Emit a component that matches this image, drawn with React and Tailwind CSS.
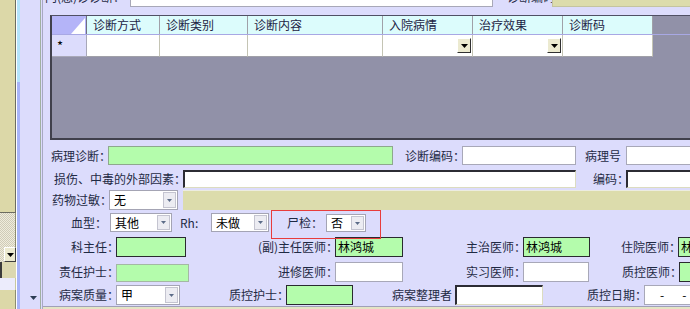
import React from 'react'

// small building blocks for the old-style form
function Lbl({ className = '', children }) {
  return (
    <div className={`shrink-0 flex items-center justify-end whitespace-nowrap text-[#1f2a44] ${className}`}>
      <span className="-mr-[3px]">{children}</span>
    </div>
  )
}

function Combo({ className = '', value }) {
  return (
    <div className={`shrink-0 flex items-stretch bg-white border border-[#a4a4b4] ${className}`}>
      <span className="flex-1 pl-[4px] flex items-center text-black">{value}</span>
      <span className="w-[13px] my-[1px] mr-[1px] bg-[#ececf2] border border-[#c4c4d0] flex items-center justify-center">
        <svg width="5" height="3" viewBox="0 0 5 3">
          <path d="M0 0h5L2.5 3z" fill="#5c6c88" />
        </svg>
      </span>
    </div>
  )
}

function GridBtn() {
  return (
    <span className="w-[14px] h-[15px] bg-[#ecead0] border border-t-white border-l-white border-r-[#303030] border-b-[#303030] flex items-center justify-center">
      <svg width="7" height="4" viewBox="0 0 7 4">
        <path d="M0 0h7L3.5 4z" fill="#000" />
      </svg>
    </span>
  )
}

const green = 'shrink-0 bg-[#b4fcac] border border-[#2a2a30] flex items-center pl-[2px] text-black whitespace-nowrap overflow-hidden'
const greenLight = 'shrink-0 bg-[#b4fcac] border border-[#a4b8a4]'
const white = 'shrink-0 bg-white border border-[#a8a8b8]'
const sunken = 'shrink-0 bg-white border-t-2 border-l-2 border-t-[#2c2c34] border-l-[#2c2c34] border-b border-r border-b-[#dcdcc0] border-r-[#dcdcc0]'

export default function App() {
  return (
    <div className="w-[690px] h-[309px] overflow-hidden flex bg-[#dcdcfc] font-['Noto_Sans_CJK_SC',sans-serif] text-[12px] leading-none">
      {/* left neighbour window strip */}
      <div className="w-[40px] shrink-0 flex">
        <div className="w-[16px] flex flex-col">
          <div className="h-[213px] bg-[#dcd8a8] border-r border-b border-[#6c6c60]" />
          <div className="h-[34px] border-r border-[#8c8c70] bg-[image:repeating-conic-gradient(#cfcbb8_0_25%,#efecdc_0_50%)] bg-[length:2px_2px]" />
          <div className="h-[15px] flex">
            <div className="w-[4px] bg-[image:repeating-conic-gradient(#cfcbb8_0_25%,#efecdc_0_50%)] bg-[length:2px_2px]" />
            <div className="flex-1 bg-[#ecead0] border border-t-white border-l-white border-r-[#404040] border-b-[#404040] flex items-center justify-center">
              <svg width="7" height="4" viewBox="0 0 7 4">
                <path d="M0 0h7L3.5 4z" fill="#000" />
              </svg>
            </div>
          </div>
          <div className="h-[16px] bg-[#dcd8b0] border-l-2 border-[#3c3c3c]" />
          <div className="h-[12px] bg-[#ececfc] border-r border-[#c8c8a0]" />
          <div className="flex-1 bg-[#dcd8a8] border-r border-[#8c8c70]" />
        </div>
        <div className="w-[1px] bg-white" />
        <div className="w-[3px] flex flex-col">
          <div className="h-[82px] bg-[#b4e4fc]" />
          <div className="flex-1 bg-[#a8b4f8]" />
        </div>
        <div className="flex-1 flex flex-col justify-end pb-[9px] pl-[10px]">
          <svg width="7" height="4" viewBox="0 0 7 4">
            <path d="M0 0h7L3.5 4z" fill="#2c3c54" />
          </svg>
        </div>
      </div>

      {/* main form panel */}
      <div className="flex-1 min-w-0 border-l border-[#a0b0a0] pl-[1px]">
        <div className="h-full flex flex-col border-l border-[#a8a8c4] overflow-hidden">
          {/* top row, mostly scrolled out */}
          <div className="h-[15px] shrink-0">
            <div className="-mt-[14px] h-[21px] flex">
              <Lbl className="w-[87px] pr-[8px]">门(急)诊诊断：</Lbl>
              <div className="w-[363px] shrink-0 bg-white border border-[#a8a8b8]" />
              <Lbl className="w-[59px] justify-center">诊断编码</Lbl>
              <div className="w-[140px] shrink-0 bg-[#dcdcac] border border-[#c4c4a0]" />
            </div>
          </div>

          {/* diagnosis grid */}
          <div className="ml-[7px] h-[125px] shrink-0 flex flex-col bg-[#9191a8] border-t border-l-2 border-b-2 border-t-[#505064] border-l-[#40404c] border-b-[#40404c]">
            <div className="h-[19px] flex border-b border-[#a8a8e4] text-[#1c2444]">
              <div className="w-[35px] shrink-0 bg-[#b4b4f8] border-r border-[#707080] flex items-end justify-end">
                <svg width="16" height="17" viewBox="0 0 16 17">
                  <path d="M15 1V17H1z" fill="#fff" />
                </svg>
              </div>
              <div className="w-[73px] shrink-0 bg-[#dcfcfc] border-r border-[#a0a0a8] flex items-center pl-[6px]">诊断方式</div>
              <div className="w-[88px] shrink-0 bg-[#dcfcfc] border-r border-[#a0a0a8] flex items-center pl-[6px]">诊断类别</div>
              <div className="w-[135px] shrink-0 bg-[#dcfcfc] border-r border-[#a0a0a8] flex items-center pl-[6px]">诊断内容</div>
              <div className="w-[90px] shrink-0 bg-[#dcfcfc] border-r border-[#a0a0a8] flex items-center pl-[6px]">入院病情</div>
              <div className="w-[90px] shrink-0 bg-[#dcfcfc] border-r border-[#a0a0a8] flex items-center pl-[6px]">治疗效果</div>
              <div className="w-[90px] shrink-0 bg-[#dcfcfc] border-r border-[#a0a0a8] flex items-center pl-[6px]">诊断码</div>
            </div>
            <div className="h-[22px] flex">
              <div className="w-[35px] shrink-0 bg-[#dcdcfc] border-r border-b border-[#a8a8b8] flex items-center pl-[5px] text-[13px] text-black">*</div>
              <div className="w-[73px] shrink-0 bg-white border-r border-b border-r-[#c4c4b4] border-b-[#a0a0a8]" />
              <div className="w-[88px] shrink-0 bg-white border-r border-b border-r-[#c4c4b4] border-b-[#a0a0a8]" />
              <div className="w-[135px] shrink-0 bg-white border-r border-b border-r-[#c4c4b4] border-b-[#a0a0a8]" />
              <div className="w-[90px] shrink-0 bg-white border-r border-b border-r-[#c4c4b4] border-b-[#a0a0a8] flex items-center justify-end pr-[1px]">
                <GridBtn />
              </div>
              <div className="w-[90px] shrink-0 bg-white border-r border-b border-r-[#c4c4b4] border-b-[#a0a0a8] flex items-center justify-end pr-[1px]">
                <GridBtn />
              </div>
              <div className="w-[90px] shrink-0 bg-white border-r border-b border-r-[#c4c4b4] border-b-[#a0a0a8]" />
            </div>
          </div>

          {/* 病理诊断 */}
          <div className="mt-[6px] h-[19px] shrink-0 flex">
            <Lbl className="w-[65px]">病理诊断：</Lbl>
            <div className="w-[285px] shrink-0 bg-[#b4fcac] border border-[#8ea88e]" />
            <Lbl className="w-[69px]">诊断编码：</Lbl>
            <div className={`w-[114px] ${white}`} />
            <Lbl className="w-[50px] pr-[8px]">病理号</Lbl>
            <div className={`w-[80px] ${white}`} />
          </div>

          {/* 外部因素 */}
          <div className="mt-[5px] h-[18px] shrink-0 flex">
            <Lbl className="w-[140px]">损伤、中毒的外部因素：</Lbl>
            <div className={`w-[393px] ${sunken}`} />
            <Lbl className="w-[50px]">编码：</Lbl>
            <div className={`w-[80px] ${sunken}`} />
          </div>

          {/* 药物过敏 */}
          <div className="mt-[2px] h-[20px] shrink-0 flex">
            <Lbl className="w-[66px]">药物过敏：</Lbl>
            <Combo className="w-[69px]" value="无" />
            <div className="w-[5px] shrink-0" />
            <div className="w-[510px] shrink-0 bg-[#dcdcac] border-t border-[#ecece0]" />
          </div>

          {/* 血型 / Rh / 尸检 */}
          <div className="mt-[3px] h-[19px] shrink-0 flex">
            <Lbl className="w-[67px] pr-[6px]">血型：</Lbl>
            <Combo className="w-[62px]" value="其他" />
            <Lbl className="w-[39px] justify-start pl-[8px]">Rh:</Lbl>
            <Combo className="w-[58px]" value="未做" />
            <div className="relative flex shrink-0">
              <Lbl className="w-[57px] pr-[6px]">尸检：</Lbl>
              <Combo className="w-[40px] mt-[1px]" value="否" />
              <div className="absolute left-[2px] -top-[3px] w-[110px] h-[29px] border border-[#e83c3c]" />
            </div>
          </div>

          {/* 医师 */}
          <div className="mt-[5px] h-[20px] shrink-0 flex">
            <Lbl className="w-[73px]">科主任：</Lbl>
            <div className={`w-[70px] ${green}`} />
            <Lbl className="w-[149px]">(副)主任医师：</Lbl>
            <div className={`w-[68px] ${green}`}>林鸿城</div>
            <Lbl className="w-[120px]">主治医师：</Lbl>
            <div className={`w-[67px] ${green}`}>林鸿城</div>
            <Lbl className="w-[88px]">住院医师：</Lbl>
            <div className={`w-[40px] ${green}`}>林鸿城</div>
          </div>

          {/* 护士 / 进修 / 实习 */}
          <div className="mt-[5px] h-[20px] shrink-0 flex">
            <Lbl className="w-[73px]">责任护士：</Lbl>
            <div className={`w-[73px] mt-[2px] ${greenLight}`} />
            <Lbl className="w-[146px]">进修医师：</Lbl>
            <div className={`w-[68px] ${white}`} />
            <Lbl className="w-[120px]">实习医师：</Lbl>
            <div className={`w-[66px] ${white}`} />
            <Lbl className="w-[90px]">质控医师：</Lbl>
            <div className={`w-[40px] ${green}`} />
          </div>

          {/* 病案质量 */}
          <div className="mt-[3px] h-[20px] shrink-0 flex">
            <Lbl className="w-[73px]">病案质量：</Lbl>
            <Combo className="w-[64px]" value="甲" />
            <Lbl className="w-[106px]">质控护士：</Lbl>
            <div className={`w-[67px] ${green}`} />
            <Lbl className="w-[102px] pr-[6px]">病案整理者</Lbl>
            <div className={`w-[88px] ${sunken}`} />
            <Lbl className="w-[101px]">质控日期：</Lbl>
            <div className={`w-[60px] ${white} flex items-center text-black`}>
              <span className="pl-[15px]">-</span>
              <span className="pl-[18px]">-</span>
            </div>
          </div>

          <div className="flex-1 mt-[1px] border-t border-[#a0a0b8] bg-[#e4e4c4]" />
        </div>
      </div>
    </div>
  )
}
